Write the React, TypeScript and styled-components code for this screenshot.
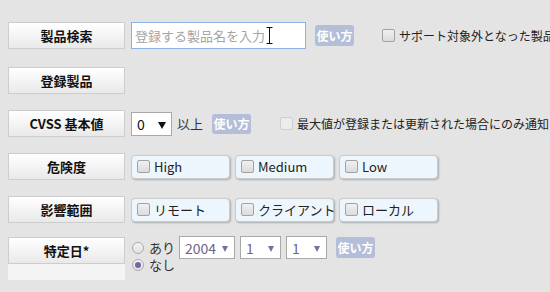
import React from 'react'
import styled, { createGlobalStyle } from 'styled-components'

const GlobalStyle = createGlobalStyle`
	body {
		margin: 0;
		background: #e4e4e4;
		font-family: 'Noto Sans CJK JP', 'Noto Sans', sans-serif;
		font-size: 13px;
		color: #222;
		overflow: hidden;
	}
`

const Form = styled.div`
	display: flex;
	flex-direction: column;
	padding: 22px 0 0 8px;
	white-space: nowrap;
	overflow: hidden;
`

const Row = styled.div<{ $space: number; $top?: boolean }>`
	display: flex;
	align-items: ${(p) => (p.$top ? 'flex-start' : 'center')};
	margin-bottom: ${(p) => p.$space}px;

	& > * {
		flex-shrink: 0;
	}
`

const Label = styled.div`
	box-sizing: border-box;
	flex: none;
	width: 117px;
	height: 27px;
	margin-right: 6px;
	display: flex;
	align-items: center;
	justify-content: center;
	border: 1px solid #cdcdcd;
	background: linear-gradient(to bottom, #ffffff, #e9e9e9);
	font-weight: bold;
	font-size: 13px;
	color: #111;
`

const LabelColumn = styled.div`
	display: flex;
	flex-direction: column;
	margin-right: 6px;

	${Label} {
		margin-right: 0;
	}
`

const Filler = styled.div`
	width: 117px;
	height: 16px;
	background: #f4f4f4;
`

const InputWrap = styled.div`
	position: relative;
	box-sizing: border-box;
	flex: none;
	width: 175px;
	height: 27px;
	border: 1px solid #8db2e6;
	background: #fff;
	display: flex;
	align-items: center;
	padding-left: 3px;
	color: #a4a4a4;
	margin-right: 9px;
`

const Cursor = styled.svg`
	position: absolute;
	left: 134px;
	top: 4px;
`

const Help = styled.span<{ $h?: number }>`
	flex: none;
	display: inline-flex;
	align-items: center;
	justify-content: center;
	width: 39px;
	height: ${(p) => p.$h ?? 21}px;
	border-radius: 3px;
	background: #b4bed8;
	color: #fff;
	font-weight: bold;
	font-size: 12px;
`

const Check = styled.span<{ $faded?: boolean }>`
	flex: none;
	box-sizing: border-box;
	display: inline-block;
	width: 13px;
	height: 13px;
	border-radius: 2px;
	border: 1px solid ${(p) => (p.$faded ? '#cfcfcf' : '#a2a2a2')};
	background: ${(p) =>
		p.$faded ? '#ececec' : 'linear-gradient(to bottom, #f0f0f0, #dcdcdc)'};
`

const CheckLabel = styled.span<{ $left: number }>`
	display: inline-flex;
	align-items: center;
	gap: 4px;
	margin-left: ${(p) => p.$left}px;
	font-size: 12px;
	color: #222;
`

const Select = styled.div<{ $w: number; $muted?: boolean }>`
	box-sizing: border-box;
	position: relative;
	flex: none;
	width: ${(p) => p.$w}px;
	height: ${(p) => (p.$muted ? 23 : 24)}px;
	border: 1px solid #a9a9a9;
	background: #fff;
	display: flex;
	align-items: center;
	padding-left: 5px;
	font-size: 14px;
	color: ${(p) => (p.$muted ? '#6d6590' : '#111')};
	margin-right: 5px;

	&::after {
		content: '';
		position: absolute;
		right: ${(p) => (p.$muted ? 6 : 5)}px;
		top: 50%;
		margin-top: -2px;
		border-left: ${(p) => (p.$muted ? 3 : 4)}px solid transparent;
		border-right: ${(p) => (p.$muted ? 3 : 4)}px solid transparent;
		border-top: ${(p) => (p.$muted ? 6 : 7)}px solid
			${(p) => (p.$muted ? '#7a6c9c' : '#111')};
	}
`

const Text = styled.span<{ $right?: number }>`
	margin-right: ${(p) => p.$right ?? 0}px;
	line-height: 13px;
	color: #333;
`

const Options = styled.div`
	display: flex;
	gap: 5px;
`

const Option = styled.div`
	box-sizing: border-box;
	width: 99px;
	height: 24px;
	display: flex;
	align-items: center;
	gap: 4px;
	padding-left: 5px;
	border: 1px solid #cbcbcb;
	border-radius: 4px;
	background: #eef6fd;
	box-shadow: 1px 1px 2px rgba(0, 0, 0, 0.25);
	color: #222;
`

const DateBlock = styled.div`
	display: flex;
	flex-direction: column;
	margin-top: -1px;
`

const DateLine = styled.div`
	display: flex;
	align-items: center;
	height: 23px;
`

const Radio = styled.span<{ $on?: boolean }>`
	box-sizing: border-box;
	flex: none;
	display: inline-flex;
	align-items: center;
	justify-content: center;
	width: 12px;
	height: 12px;
	margin: 0 5px 0 1px;
	border-radius: 50%;
	border: 1px solid #ababab;
	background: linear-gradient(to bottom, #f4f4f4, #e0e0e0);

	&::after {
		content: '';
		display: ${(p) => (p.$on ? 'block' : 'none')};
		width: 6px;
		height: 6px;
		border-radius: 50%;
		background: #7b63a6;
	}
`

const NoneLine = styled.div`
	display: flex;
	align-items: center;
	height: 15px;
	margin-top: -2px;
`

const riskLevels = ['High', 'Medium', 'Low']
const scopes = ['リモート', 'クライアント', 'ローカル']

export default function App() {
	return (
		<>
			<GlobalStyle />
			<Form>
				<Row $space={18}>
					<Label>製品検索</Label>
					<InputWrap>
						登録する製品名を入力
						<Cursor width="7" height="17" viewBox="0 0 7 17">
							<path
								d="M0.5 0.5h6M3.5 0.5v16M0.5 16.5h6"
								stroke="#111"
								strokeWidth="1"
								fill="none"
							/>
						</Cursor>
					</InputWrap>
					<Help>使い方</Help>
					<CheckLabel $left={28}>
						<Check />
						サポート対象外となった製品
					</CheckLabel>
				</Row>

				<Row $space={16}>
					<Label>登録製品</Label>
				</Row>

				<Row $space={16}>
					<Label>CVSS 基本値</Label>
					<Select $w={41}>0</Select>
					<Text $right={9}>以上</Text>
					<Help $h={20}>使い方</Help>
					<CheckLabel $left={29}>
						<Check $faded />
						最大値が登録または更新された場合にのみ通知す
					</CheckLabel>
				</Row>

				<Row $space={16}>
					<Label>危険度</Label>
					<Options>
						{riskLevels.map((r) => (
							<Option key={r}>
								<Check />
								{r}
							</Option>
						))}
					</Options>
				</Row>

				<Row $space={14}>
					<Label>影響範囲</Label>
					<Options>
						{scopes.map((s) => (
							<Option key={s}>
								<Check />
								{s}
							</Option>
						))}
					</Options>
				</Row>

				<Row $space={0} $top>
					<LabelColumn>
						<Label>特定日*</Label>
						<Filler />
					</LabelColumn>
					<DateBlock>
						<DateLine>
							<Radio />
							<Text $right={4}>あり</Text>
							<Select $w={56} $muted>
								2004
							</Select>
							<Select $w={41} $muted>
								1
							</Select>
							<Select $w={41} $muted style={{ marginRight: 9 }}>
								1
							</Select>
							<Help>使い方</Help>
						</DateLine>
						<NoneLine>
							<Radio $on />
							<Text>なし</Text>
						</NoneLine>
					</DateBlock>
				</Row>
			</Form>
		</>
	)
}
